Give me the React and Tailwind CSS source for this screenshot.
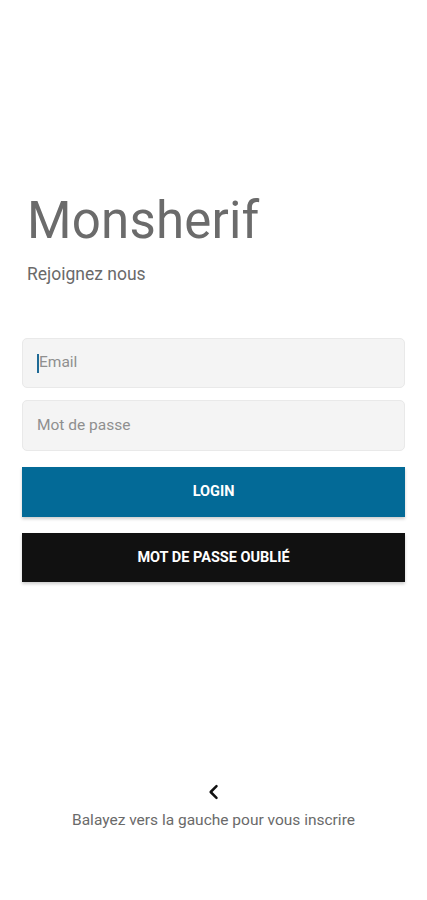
import React from 'react';

function App() {
  return (
    <div className="relative w-[427px] h-[900px] bg-white overflow-hidden text-gray-800" style={{ fontFamily: 'Roboto, "Liberation Sans", sans-serif' }}>
      <div className="pt-[189px] px-[22px]">
        {/* Header */}
        <div className="pl-[5px]">
          <h1 className="text-[51px] leading-[64px] text-[#6b6b6b] tracking-[0.2px]">Monsherif</h1>
          <p className="mt-[10px] text-[17.5px] leading-[22px] text-[#6a6a6a]">Rejoignez nous</p>
        </div>

        {/* Form */}
        <div className="mt-[53px] flex flex-col">
          <div className="h-[50px] rounded-[5px] bg-[#f4f4f4] border border-[#e9e9e9] flex items-center pl-[14px]">
            <span className="w-[2px] h-[19px] bg-[#1f6a96]"></span>
            <span className="text-[15.5px] text-[#8f8f8f]">Email</span>
          </div>
          <div className="mt-[12px] h-[51px] rounded-[5px] bg-[#f4f4f4] border border-[#e9e9e9] flex items-center pl-[14px]">
            <span className="text-[15.5px] text-[#8f8f8f]">Mot de passe</span>
          </div>

          <button className="mt-[16px] h-[50px] bg-[#036a97] text-white text-[14.5px] font-bold shadow-[0_2px_3px_rgba(0,0,0,0.2)]">
            LOGIN
          </button>
          <button className="mt-[16px] h-[49px] bg-[#111111] text-white text-[14.5px] font-bold shadow-[0_2px_3px_rgba(0,0,0,0.2)]">
            MOT DE PASSE OUBLIÉ
          </button>
        </div>
      </div>

      {/* Swipe hint */}
      <div className="absolute left-0 right-0 top-[782px] flex flex-col items-center">
        <svg width="20" height="20" viewBox="0 0 24 24" fill="none" stroke="#111" strokeWidth="3" strokeLinecap="round" strokeLinejoin="round">
          <path d="M15 5l-7 7 7 7" />
        </svg>
        <p className="mt-[7px] text-[15.5px] text-[#6a6a6a]">Balayez vers la gauche pour vous inscrire</p>
      </div>
    </div>
  );
}

export default App;
